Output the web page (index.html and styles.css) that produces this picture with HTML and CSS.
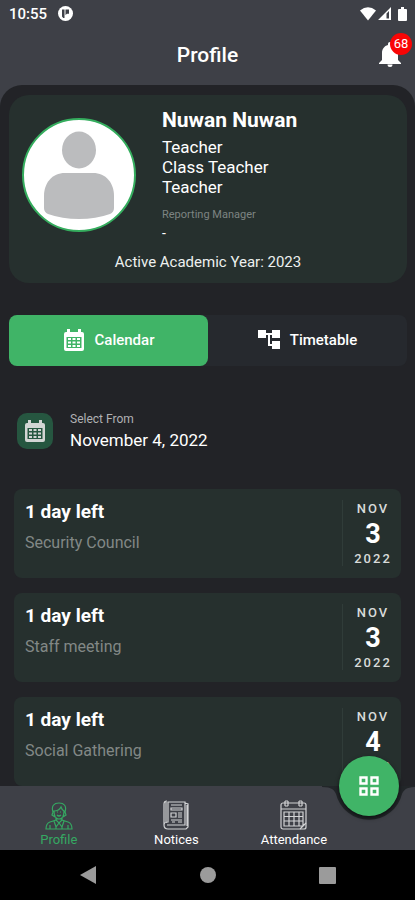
FILE: index.html
```html
<!DOCTYPE html>
<html lang="en">
<head>
<meta charset="utf-8">
<meta name="viewport" content="width=device-width, initial-scale=1">
<title>Profile</title>
<link rel="stylesheet" href="styles.css">
</head>
<body>
<svg class="sprite" aria-hidden="true">
  <symbol id="calendar" viewBox="0 0 22 24">
    <path fill="currentColor" fill-rule="evenodd" d="M4 1h3v3h8V1h3v3h1a2 2 0 0 1 2 2v15a2 2 0 0 1-2 2H3a2 2 0 0 1-2-2V6a2 2 0 0 1 2-2h1zM3.500 9v11h15V9z"/>
    <path fill="currentColor" d="M5 10h3v2H5zM9.500 10h3v2h-3zM14 10h3v2h-3zM5 13.500h3v2H5zM9.500 13.500h3v2h-3zM14 13.500h3v2h-3zM5 17h3v2H5zM9.500 17h3v2h-3zM14 17h3v2h-3z"/>
  </symbol>
</svg>
<div class="app">
  <header class="top">
    <div class="status">
      <span class="clock">10:55</span>
      <svg width="15" height="15" viewBox="0 0 15 15" aria-hidden="true"><circle cx="7.500" cy="7.500" r="7.500" fill="#fff"/><path fill="#3e4047" d="M4 3.500h2.500v8.500H5.200L4 10.500zM7.500 3.500H11v4.200H9L7.500 9z"/></svg>
      <span class="signals">
        <svg width="16" height="14" viewBox="0 0 16 14" aria-hidden="true"><path fill="#fff" d="M0 3.500Q8-3 16 3.500L8 13.500z"/></svg>
        <svg width="13" height="14" viewBox="0 0 13 14" aria-hidden="true"><path fill="#fff" d="M13 0v13H0zM11 4 8.500 6.500V11.500H11z" fill-rule="evenodd"/></svg>
        <svg class="battery" width="9" height="14" viewBox="0 0 9 14" aria-hidden="true"><path fill="#fff" d="M3 0h3v2h2a1 1 0 0 1 1 1v10a1 1 0 0 1-1 1H1a1 1 0 0 1-1-1V3a1 1 0 0 1 1-1h2z"/></svg>
      </span>
    </div>
    <div class="titlebar">
      <h1>Profile</h1>
      <button class="bell" aria-label="Notifications">
        <svg width="22" height="27" viewBox="0 0 22 27" aria-hidden="true"><path fill="#fff" d="M11 0c1.200 0 2 .9 2 2v1c3.800 1 6 4 6 8v7l3 3v1H0v-1l3-3v-7c0-4 2.200-7 6-8V2c0-1.100.8-2 2-2M8.500 22.500h5a2.500 2.500 0 0 1-5 0"/></svg>
        <span class="badge">68</span>
      </button>
    </div>
  </header>

  <main>
    <section class="profile">
      <div class="person">
        <svg class="avatar" viewBox="0 0 114 114" role="img" aria-label="Avatar"><circle cx="57" cy="57" r="56" fill="#fff" stroke="#35ad5e" stroke-width="2"/><ellipse cx="57" cy="32" rx="17" ry="18.500" fill="#bbbcbe"/><path fill="#bbbcbe" d="M22 78c0-13 8-23 21-23h28c13 0 21 10 21 23v12q0 4-4 6-14 5-31 5t-31-5q-4-2-4-6z"/></svg>
        <div class="details">
          <h2>Nuwan Nuwan</h2>
          <ul><li>Teacher</li><li>Class Teacher</li><li>Teacher</li></ul>
          <p class="label">Reporting Manager</p>
          <p class="manager">-</p>
        </div>
      </div>
      <p class="year">Active Academic Year: 2023</p>
    </section>

    <div class="tabs">
      <button class="tab active"><svg width="22" height="24" aria-hidden="true"><use href="#calendar"/></svg>Calendar</button>
      <button class="tab"><svg width="22" height="20" viewBox="0 0 22 20" aria-hidden="true"><path fill="#fff" d="M0 0h8v3h6V0h8v8h-8V5h-2v9h2v-3h8v8h-8v-3h-4V5H8v3H0z"/></svg>Timetable</button>
    </div>

    <button class="date">
      <span class="dateicon"><svg width="22" height="24" aria-hidden="true"><use href="#calendar"/></svg></span>
      <span class="datetext"><span class="from">Select From</span><span class="day">November 4, 2022</span></span>
    </button>

    <div class="events">
      <article class="event"><div class="info"><h3>1 day left</h3><p>Security Council</p></div><time datetime="2022-11-03"><span>NOV</span><b>3</b><span>2022</span></time></article>
      <article class="event"><div class="info"><h3>1 day left</h3><p>Staff meeting</p></div><time datetime="2022-11-03"><span>NOV</span><b>3</b><span>2022</span></time></article>
      <article class="event"><div class="info"><h3>1 day left</h3><p>Social Gathering</p></div><time datetime="2022-11-04"><span>NOV</span><b>4</b><span>2022</span></time></article>
    </div>
  </main>

  <nav class="nav">
    <a href="#profile" class="current">
      <svg width="28" height="28" viewBox="0 0 28 28" fill="none" stroke="currentColor" stroke-width="1.200" aria-hidden="true"><path d="M8 10C6 4 9 1 14 1s8 3 6 9l1 3-3 2M8 10l-1 3 3 2M9 9q5 0 7-4 1 3 3 4c0 5-2 8-5 8s-5-3-5-8zM11 15v3l-6 2c-3 1-4 4-4 7h26c0-3-1-6-4-7l-6-2v-3M11 18l3 3 3-3M9 19l2 6 3-4 3 4 2-6M5 27v-4M23 27v-4M11 25v2M17 25v2M12 10h1M15 10h1M12 13q2 2 4 0"/></svg>
      <span>Profile</span>
    </a>
    <a href="#notices">
      <svg width="26" height="30" viewBox="0 0 26 30" fill="none" stroke="#d2d3d5" stroke-width="1.200" aria-hidden="true"><path d="M4 1q-3 0-3 3v21q0 4 4 4h18l2-2V4l-3-1M1 25q0-3 4-3V2h17v23H4M3 2v21M8 5h11M8 8h11v2H8zM8 13h5v4H8zM15 13h4M15 15h4M15 17h4M8 20h11M9 22h3M15 22h4M24 5v21"/></svg>
      <span>Notices</span>
    </a>
    <a href="#attendance">
      <svg width="27" height="30" viewBox="0 0 27 30" fill="none" stroke="#d2d3d5" stroke-width="1.200" aria-hidden="true"><rect x="1" y="3" width="25" height="26" rx="2"/><path d="M1 9h25M5 1v5M8 1v5M19 1v5M22 1v5M5 1h3M19 1h3M5 6h3M19 6h3M4 12h19v14H4zM4 16.500h19M4 21h19M9 12v14M14 12v14M19 12v14M20 29l6-6"/></svg>
      <span>Attendance</span>
    </a>
    <svg class="notch" width="94" height="38" viewBox="0 0 94 38" aria-hidden="true"><path fill="#222629" d="M0 0h94v1c-10 0-12 3-14 7a34 34 0 0 1-66 0C12 4 10 1 0 1z"/></svg>
    <button class="fab" aria-label="Menu"><svg width="20" height="20" viewBox="0 0 20 20" fill="none" stroke="#fff" stroke-width="2.400" aria-hidden="true"><path d="M1.500 1.500h6v6h-6zM12.500 1.500h6v6h-6zM1.500 12.500h6v6h-6zM12.500 12.500h6v6h-6z"/></svg></button>
  </nav>

  <div class="system">
    <svg width="16" height="18" viewBox="0 0 16 18" aria-hidden="true"><path fill="#9b9b9b" d="M0 9 16 0v18z"/></svg>
    <svg width="16" height="16" viewBox="0 0 16 16" aria-hidden="true"><circle cx="8" cy="8" r="8" fill="#9b9b9b"/></svg>
    <svg width="17" height="17" viewBox="0 0 17 17" aria-hidden="true"><rect width="17" height="17" rx="1" fill="#9b9b9b"/></svg>
  </div>
</div>
</body>
</html>
```
FILE: styles.css
```css
* { box-sizing: border-box; margin: 0; padding: 0; }
body { font-family: Roboto, "Liberation Sans", sans-serif; color: #fff; background: #3e4047; }
button { font: inherit; color: inherit; background: none; border: 0; cursor: pointer; }
a { color: inherit; text-decoration: none; }
svg { display: block; flex: none; }
ul { list-style: none; }
.sprite { position: absolute; width: 0; height: 0; }
.app { height: 100vh; display: flex; flex-direction: column; overflow: hidden; }

.top { flex: none; }
.status { height: 27px; padding: 0 8px 0 9px; display: flex; align-items: center; gap: 11px; }
.clock { font-size: 15px; font-weight: 500; }
.signals { margin-left: auto; display: flex; align-items: center; gap: 2px; }
.battery { margin-left: 5px; }
.titlebar { height: 58px; display: grid; grid-template-columns: 1fr auto 1fr; align-items: center; padding: 0 14px 2px; }
.titlebar h1 { grid-column: 2; font-size: 21px; font-weight: 500; line-height: 24px; }
.bell { position: relative; justify-self: end; }
.badge { position: absolute; top: -9px; right: -11px; width: 22px; height: 22px; border-radius: 50%; background: #f90505; font-size: 13px; line-height: 22px; text-align: center; }

main { flex: 1; min-height: 0; overflow: hidden; padding: 10px 8px 0 9px; background: #222327; border-radius: 22px 22px 0 0; }
.profile { padding: 13px 13px 11px; background: #26302e; border-radius: 20px; }
.person { display: flex; gap: 26px; }
.avatar { width: 114px; height: 114px; margin-top: 10px; }
.details h2 { font-size: 21px; line-height: 24px; font-weight: 700; margin-bottom: 5px; }
.details li { font-size: 17px; line-height: 20px; }
.label { margin-top: 10px; font-size: 11px; line-height: 16px; color: #7d8482; }
.manager { font-size: 14px; line-height: 20px; }
.year { margin-top: 9px; font-size: 15px; line-height: 20px; text-align: center; color: #edf0ef; }

.tabs { margin-top: 32px; display: flex; background: #26292e; border-radius: 8px; }
.tab { flex: 1; height: 51px; padding-bottom: 2px; display: flex; align-items: center; justify-content: center; gap: 10px; border-radius: 8px; font-size: 15px; font-weight: 500; }
.active { background: #40b467; }

.date { margin: 44px 0 0 8px; display: flex; align-items: center; gap: 17px; text-align: left; }
.dateicon { width: 36px; height: 36px; border-radius: 10px; background: #265640; color: #d3d5d4; display: grid; place-items: center; }
.datetext { display: grid; }
.from { font-size: 12px; line-height: 18px; color: #b0b1b3; }
.day { font-size: 17px; line-height: 24px; }

.events { margin: 37px 6px 0 5px; display: grid; gap: 15px; }
.event { height: 89px; padding: 11px 5px 10px 11px; display: flex; background: #26302e; border-radius: 8px; }
.info { flex: 1; }
.info h3 { font-size: 19px; line-height: 24px; font-weight: 700; }
.info p { margin-top: 8px; font-size: 16px; line-height: 22px; color: #828886; }
.event time { width: 54px; height: 66px; display: grid; grid-template-rows: 18px 32px 16px; text-align: center; border-left: 1px solid #303c39; padding-left: 7px; }
.event time span { font-size: 13px; line-height: 18px; font-weight: 500; letter-spacing: 2px; color: #d8dbda; }
.event time b { font-size: 27px; line-height: 32px; font-weight: 700; }

.nav { flex: none; position: relative; height: 64px; padding-right: 15%; display: flex; background: #3e4047; }
.nav a { flex: 1; display: flex; flex-direction: column; align-items: center; justify-content: flex-end; gap: 2px; padding-bottom: 2px; font-size: 13px; line-height: 16px; }
.nav .current { color: #35a862; }
.notch { position: absolute; right: -1px; top: 0; }
.fab { position: absolute; right: 16px; top: -30px; width: 60px; height: 60px; border-radius: 50%; background: #40b467; display: grid; place-items: center; box-shadow: 0 2px 4px #0009; }

.system { flex: none; height: 50px; background: #000; display: grid; grid-template-columns: repeat(3, 120px); justify-content: center; align-items: center; justify-items: center; }
```
